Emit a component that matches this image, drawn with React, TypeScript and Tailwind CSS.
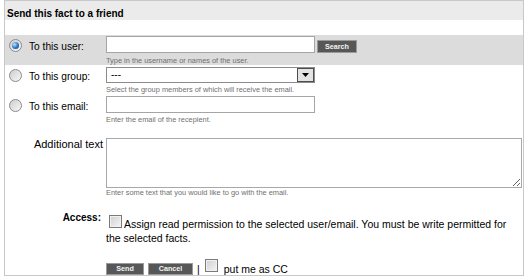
import React from 'react'

const help = 'text-[7.4px] leading-[10px] text-[#6f6f6f] whitespace-nowrap'
const label = 'text-[10.2px] leading-[12px] whitespace-nowrap'

function Radio({ checked }: { checked?: boolean }) {
  return (
    <span className="w-[13px] h-[13px] shrink-0 rounded-full border border-[#8b8b8b] bg-[linear-gradient(135deg,#cdcdcd,#f8f8f8)] flex items-center justify-center">
      {checked && (
        <span className="w-[7px] h-[7px] rounded-full bg-[radial-gradient(circle_at_35%_35%,#bfe6ff,#2b73c0_55%,#123f78)]" />
      )}
    </span>
  )
}

function Checkbox({ className = '' }: { className?: string }) {
  return (
    <span
      className={`inline-block w-[13px] h-[13px] shrink-0 border border-[#7a7a7a] bg-[linear-gradient(135deg,#cfcfcf,#f5f5f5)] shadow-[inset_0_0_0_1px_#f1f1f1] ${className}`}
    />
  )
}

function Btn({ children, className = '' }: { children: React.ReactNode; className?: string }) {
  return (
    <button
      className={`bg-[#575757] border border-[#9a9a9a] text-[#f4f4f4] font-bold text-[7.2px] leading-none flex items-center justify-center ${className}`}
    >
      {children}
    </button>
  )
}

export default function App() {
  return (
    <div className="w-[527px] h-[279px] bg-white font-['Liberation_Sans',Arial,sans-serif] text-black">
      <div className="ml-[4px] w-[520px] h-[276px] border border-[#c8c8c8] flex flex-col">
        {/* Header */}
        <div className="h-[19px] shrink-0 bg-[#ebebeb] pl-[2px] pt-[7px] text-[10px] font-bold leading-[12px]">
          Send this fact to a friend
        </div>

        {/* To this user */}
        <div className="mt-[15px] h-[30px] shrink-0 bg-[#dcdcdc] flex">
          <div className="w-[101px] flex items-start pl-[4px]">
            <span className="mt-[4px]"><Radio checked /></span>
            <span className={`${label} ml-[7px] mt-[6px]`}>To this user:</span>
          </div>
          <div className="flex flex-col">
            <div className="flex items-start mt-[1px]">
              <input className="w-[209px] h-[17px] bg-white border border-[#a5a5a5] outline-none" />
              <Btn className="ml-[2px] mt-[4px] w-[40px] h-[13px]">Search</Btn>
            </div>
            <div className={`${help} mt-[3px]`}>Type in the username or names of the user.</div>
          </div>
        </div>

        {/* To this group */}
        <div className="h-[30px] shrink-0 flex">
          <div className="w-[101px] flex items-start pl-[4px]">
            <span className="mt-[4px]"><Radio /></span>
            <span className={`${label} ml-[7px] mt-[6px]`}>To this group:</span>
          </div>
          <div className="flex flex-col">
            <div className="mt-[2px] w-[209px] h-[16px] border border-[#8c8c8c] bg-white flex">
              <span className="pl-[4px] text-[10px] leading-[14px]">---</span>
              <span className="ml-auto w-[17px] h-full border border-[#4e4e4e] bg-[#e3e3e3] flex items-center justify-center">
                <svg width="7" height="4" viewBox="0 0 7 4">
                  <path d="M0 0h7L3.5 4z" fill="#000" />
                </svg>
              </span>
            </div>
            <div className={`${help} mt-[2px]`}>Select the group members of which will receive the email.</div>
          </div>
        </div>

        {/* To this email */}
        <div className="shrink-0 flex">
          <div className="w-[101px] flex items-start pl-[4px]">
            <span className="mt-[4px]"><Radio /></span>
            <span className={`${label} ml-[7px] mt-[6px]`}>To this email:</span>
          </div>
          <div className="flex flex-col">
            <input className="mt-[1px] w-[209px] h-[17px] bg-white border border-[#a5a5a5] outline-none" />
            <div className={`${help} mt-[2px]`}>Enter the email of the recepient.</div>
          </div>
        </div>

        {/* Additional text */}
        <div className="mt-[13px] shrink-0 flex">
          <div className="w-[101px] text-right pr-[3px] text-[11px] leading-[13px]">Additional text</div>
          <div className="flex flex-col">
            <textarea className="block w-[416px] h-[50px] border border-[#a8a8a8] outline-none" />
            <div className={help}>Enter some text that you would like to go with the email.</div>
          </div>
        </div>

        {/* Access */}
        <div className="mt-[14px] shrink-0 flex">
          <div className="w-[101px] text-right pr-[5px] text-[10px] font-bold leading-[12px]">Access:</div>
          <div className="w-[415px] pt-[3px] text-[10.5px] leading-[14px]">
            <Checkbox className="ml-[3px] mr-[2px]" />
            Assign read permission to the selected user/email. You must be write permitted for the selected facts.
          </div>
        </div>

        {/* Buttons */}
        <div className="mt-[14px] shrink-0 flex">
          <div className="w-[101px]" />
          <div className="flex items-start">
            <Btn className="mt-[4px] w-[38px] h-[12px]">Send</Btn>
            <Btn className="mt-[4px] ml-[4px] w-[45px] h-[12px]">Cancel</Btn>
            <span className="ml-[4px] mt-[3px] text-[10.5px] leading-[14px]">|</span>
            <Checkbox className="ml-[5px]" />
            <span className="ml-[6px] mt-[3px] text-[10.5px] leading-[14px] whitespace-nowrap">put me as CC</span>
          </div>
        </div>
      </div>
    </div>
  )
}
